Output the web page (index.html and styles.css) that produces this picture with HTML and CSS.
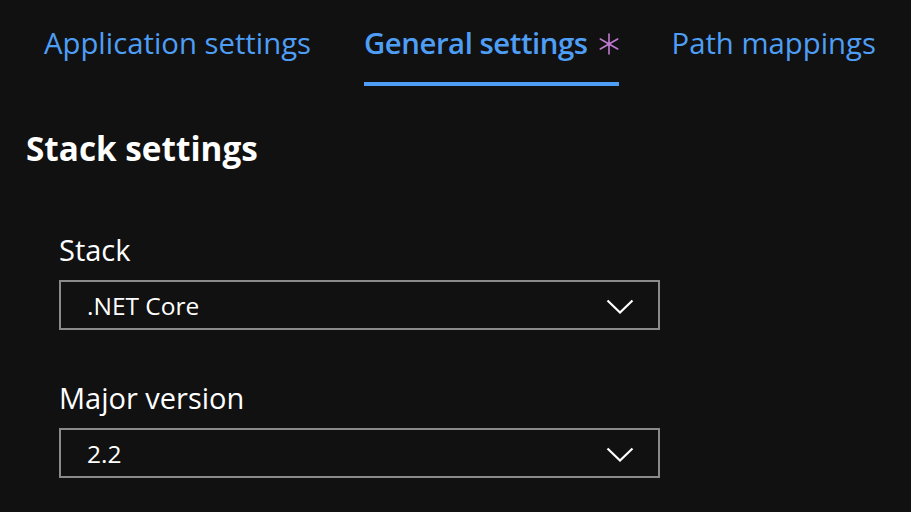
FILE: index.html
```html
<!DOCTYPE html>
<html>
<head>
<meta charset="utf-8">
<link rel="stylesheet" href="styles.css">
</head>
<body>
<nav class="tabs">
  <div class="tab">Application settings</div>
  <div class="tab active">General settings<svg class="dirty" width="20" height="22" viewBox="0 0 20 22"><g stroke="#c07ad0" stroke-width="1.6" stroke-linecap="round"><line x1="10" y1="1" x2="10" y2="21"/><line x1="1.3" y1="6" x2="18.7" y2="16"/><line x1="1.3" y1="16" x2="18.7" y2="6"/></g><circle cx="10" cy="11" r="1.8" fill="#c07ad0"/></svg></div>
  <div class="tab">Path mappings</div>
</nav>
<main class="content">
  <h2 class="section-title">Stack settings</h2>
  <div class="field">
    <label class="field-label">Stack</label>
    <div class="select"><span>.NET Core</span><svg class="chevron" width="28" height="15" viewBox="0 0 28 15"><polyline points="1.5,1.5 14,13.5 26.5,1.5" fill="none" stroke="#fff" stroke-width="2.2"/></svg></div>
  </div>
  <div class="field">
    <label class="field-label">Major version</label>
    <div class="select"><span>2.2</span><svg class="chevron" width="28" height="15" viewBox="0 0 28 15"><polyline points="1.5,1.5 14,13.5 26.5,1.5" fill="none" stroke="#fff" stroke-width="2.2"/></svg></div>
  </div>
</main>
</body>
</html>
```
FILE: styles.css
```css
html, body {
  margin: 0;
  padding: 0;
  background: #111111;
  font-family: "Open Sans", "Noto Sans", sans-serif;
  color: #ffffff;
}
.tabs {
  display: flex;
  gap: 53px;
  padding: 23px 0 0 44px;
}
.tab {
  font-size: 29.3px;
  line-height: 40px;
  color: #4f9ef6;
  padding-bottom: 19px;
  border-bottom: 4px solid transparent;
  display: flex;
  align-items: center;
  white-space: nowrap;
}
.tab.active {
  font-weight: 600;
  letter-spacing: -0.45px;
  border-bottom-color: #4f9ef6;
}
.dirty {
  margin-left: 11px;
  margin-top: 2px;
}
.content {
  padding: 0 0 0 26px;
}
.section-title {
  margin: 40px 0 0 0;
  font-size: 33.3px;
  font-weight: 700;
  line-height: 44px;
}
.field {
  padding-left: 33px;
  margin-top: 60px;
}
.field + .field {
  margin-top: 48px;
}
.field-label {
  display: block;
  font-size: 29px;
  line-height: 40px;
  margin-bottom: 10px;
}
.select {
  box-sizing: border-box;
  width: 601px;
  height: 50px;
  border: 2px solid #8a8a8a;
  display: flex;
  align-items: center;
  justify-content: space-between;
  padding: 0 24px 0 26px;
  font-size: 24.5px;
}
.chevron {
  margin-top: 3px;
}
```
